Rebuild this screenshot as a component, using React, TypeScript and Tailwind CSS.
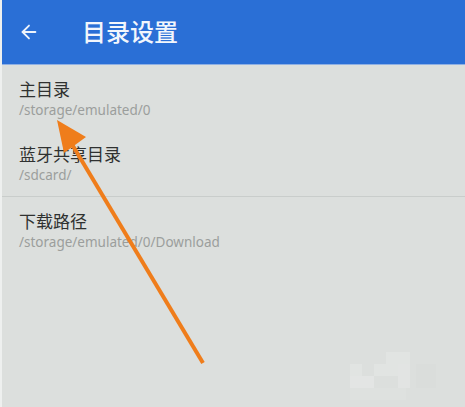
import { ArrowLeft } from "lucide-react";

const items = [
  { title: "主目录", path: "/storage/emulated/0" },
  { title: "蓝牙共享目录", path: "/sdcard/" },
  { title: "下载路径", path: "/storage/emulated/0/Download" },
];

export default function App() {
  return (
    <div
      className="relative h-[407px] w-[465px] overflow-hidden bg-[#dcdfdd] border-l-2 border-[#eef0ef]"
      style={{ fontFamily: '"Noto Sans", "Noto Sans CJK SC", sans-serif' }}
    >
      {/* Toolbar */}
      <header className="flex h-[65px] items-center bg-[#2a6fd6] pl-[16px] border-b border-[#8fb0e3]">
        <ArrowLeft className="h-[22px] w-[22px] text-[#eef3fb]" strokeWidth={2} />
        <h1 className="ml-[42px] text-[24px] font-medium leading-none text-[#f2f6fc]">
          目录设置
        </h1>
      </header>

      {/* Directory list */}
      <div className="flex flex-col">
        {items.map((item, i) => (
          <div
            key={item.title}
            className={
              "flex h-[66px] flex-col justify-center px-[17px] pt-[2px] " +
              (i === 1 ? "border-b border-[#c9cdcb]" : "")
            }
          >
            <span className="text-[17px] leading-[22px] text-[#2f3130]">{item.title}</span>
            <span className="text-[13.5px] leading-[19px] text-[#9b9e9c]">{item.path}</span>
          </div>
        ))}
      </div>

      {/* Annotation arrow */}
      <svg className="pointer-events-none absolute left-[-2px] top-0" width="465" height="407">
        <line x1="203" y1="363" x2="70" y2="141" stroke="#ef7d1b" strokeWidth="4" />
        <polygon points="57,120 86,137 64,153" fill="#ef7d1b" />
        <g fill="#e1e4e2">
          <rect x="350" y="364" width="12" height="12" />
          <rect x="350" y="376" width="24" height="12" fill="#e3e5e4" />
          <rect x="374" y="364" width="24" height="12" />
          <rect x="386" y="352" width="24" height="12" />
          <rect x="398" y="364" width="12" height="24" fill="#e2e4e3" />
          <rect x="350" y="388" width="56" height="12" fill="#dee1df" />
          <rect x="416" y="364" width="20" height="24" fill="#dadddb" />
        </g>
      </svg>
    </div>
  );
}
